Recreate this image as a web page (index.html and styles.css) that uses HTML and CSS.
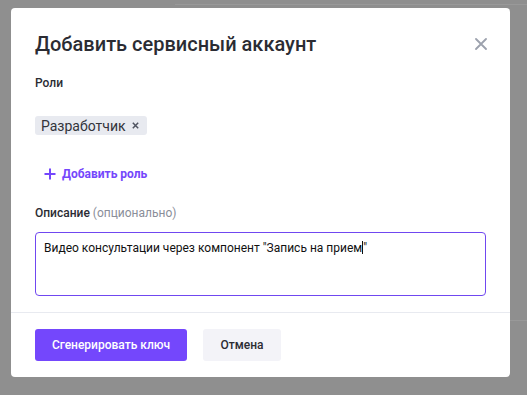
FILE: index.html
```html
<!DOCTYPE html>
<html lang="ru">
<head>
<meta charset="utf-8">
<link rel="stylesheet" href="styles.css">
</head>
<body>
<div class="backdrop">
  <div class="bg-line bg-line-top"></div>
  <div class="bg-line bg-line-right"></div>
  <div class="modal">
    <div class="modal-body">
      <div class="header">
        <h1 class="title">Добавить сервисный аккаунт</h1>
        <button class="close" aria-label="Закрыть">
          <svg width="12" height="12" viewBox="0 0 12 12"><path d="M1 1L11 11M11 1L1 11" stroke="#9ca1ad" stroke-width="1.8" stroke-linecap="round"/></svg>
        </button>
      </div>
      <div class="label">Роли</div>
      <div class="chips">
        <span class="chip">Разработчик <svg class="chip-x" width="7" height="7" viewBox="0 0 7 7"><path d="M0.8 0.8L6.2 6.2M6.2 0.8L0.8 6.2" stroke="#4f5360" stroke-width="1.5"/></svg></span>
      </div>
      <button class="add-role">
        <svg width="12" height="12" viewBox="0 0 12 12"><path d="M6 0.5V11.5M0.5 6H11.5" stroke="#7447fc" stroke-width="2"/></svg>
        <span>Добавить роль</span>
      </button>
      <div class="label desc-label">Описание <span class="optional">(опционально)</span></div>
      <div class="textarea">Видео консультации через компонент "Запись на прием<span class="caret"></span>"</div>
    </div>
    <div class="footer">
      <button class="btn btn-primary">Сгенерировать ключ</button>
      <button class="btn btn-secondary">Отмена</button>
    </div>
  </div>
</div>
</body>
</html>
```

FILE: styles.css
```css
* { box-sizing: border-box; }
html, body {
  margin: 0;
  padding: 0;
  width: 527px;
  height: 395px;
  overflow: hidden;
}
body {
  background: #8f8f8f;
  font-family: Roboto, "Noto Sans", Arial, sans-serif;
  color: #2b2c33;
}
.backdrop {
  position: relative;
  width: 527px;
  height: 395px;
  padding: 8px 0 0 11px;
}
.bg-line {
  position: absolute;
  background: #999999;
}
.bg-line-top {
  left: 175px;
  right: 0;
  top: 4px;
  height: 1px;
}
.bg-line-right {
  left: 510px;
  right: 0;
  top: 320px;
  height: 1px;
}
.modal {
  position: relative;
  width: 499px;
  height: 369px;
  background: #fff;
  border-radius: 4px;
  display: flex;
  flex-direction: column;
}
.modal-body {
  flex: 1;
  padding: 24px 22px 0 24px;
  display: flex;
  flex-direction: column;
  align-items: flex-start;
}
.header {
  width: 100%;
  display: flex;
  justify-content: space-between;
  align-items: center;
}
.title {
  margin: 0;
  font-size: 20px;
  line-height: 24px;
  font-weight: 500;
  color: #2b2c33;
}
.close {
  border: 0;
  background: none;
  padding: 0;
  width: 14px;
  height: 14px;
  display: flex;
  align-items: center;
  justify-content: center;
}
.label {
  margin-top: 19px;
  font-size: 12px;
  line-height: 16px;
  font-weight: 500;
  color: #2b2c33;
}
.chips {
  margin-top: 25px;
  display: flex;
}
.chip {
  display: inline-flex;
  align-items: center;
  height: 19px;
  padding: 0 8px 0 6px;
  background: #e8eaf0;
  border-radius: 3px;
  font-size: 14px;
  color: #33343b;
  gap: 6px;
}
.add-role {
  margin-top: 23px;
  margin-left: 9px;
  border: 0;
  background: none;
  padding: 0;
  height: 32px;
  display: flex;
  align-items: center;
  gap: 6px;
  font-family: inherit;
  font-size: 12px;
  font-weight: 700;
  color: #7447fc;
}
.desc-label {
  margin-top: 15px;
}
.optional {
  font-weight: 400;
  color: #8a8e99;
}
.textarea {
  margin-top: 11px;
  width: 451px;
  height: 64px;
  border: 1px solid #7048f0;
  border-radius: 4px;
  padding: 7px 8px;
  font-size: 12px;
  line-height: 16px;
  color: #111;
}
.caret {
  display: inline-block;
  width: 1px;
  height: 13px;
  background: #111;
  vertical-align: -2px;
}
.footer {
  border-top: 1px solid #e8eaf0;
  padding: 16px 24px;
  display: flex;
  gap: 16px;
}
.btn {
  height: 32px;
  border: 0;
  border-radius: 3px;
  font-family: inherit;
  font-size: 12px;
  font-weight: 500;
}
.btn-primary {
  width: 152px;
  background: #7447fc;
  color: #fff;
}
.btn-secondary {
  width: 78px;
  background: #f3f3f8;
  color: #2b2c33;
}
```
